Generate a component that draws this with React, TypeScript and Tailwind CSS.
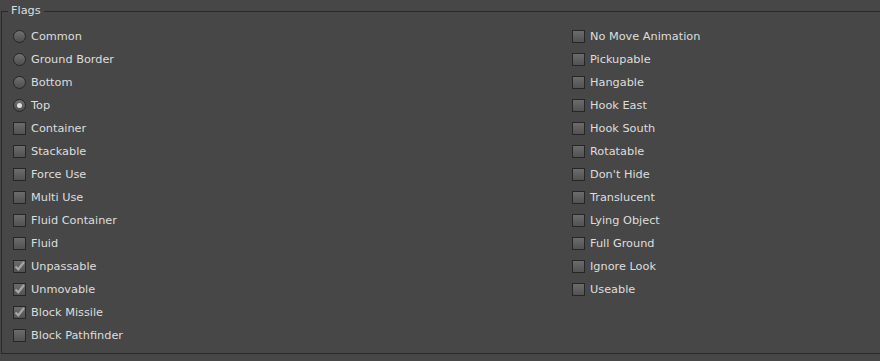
import React from 'react'

type Flag = { label: string; kind: 'radio' | 'check'; on?: boolean }

const left: Flag[] = [
  { label: 'Common', kind: 'radio' },
  { label: 'Ground Border', kind: 'radio' },
  { label: 'Bottom', kind: 'radio' },
  { label: 'Top', kind: 'radio', on: true },
  { label: 'Container', kind: 'check' },
  { label: 'Stackable', kind: 'check' },
  { label: 'Force Use', kind: 'check' },
  { label: 'Multi Use', kind: 'check' },
  { label: 'Fluid Container', kind: 'check' },
  { label: 'Fluid', kind: 'check' },
  { label: 'Unpassable', kind: 'check', on: true },
  { label: 'Unmovable', kind: 'check', on: true },
  { label: 'Block Missile', kind: 'check', on: true },
  { label: 'Block Pathfinder', kind: 'check' },
]

const right: Flag[] = [
  'No Move Animation',
  'Pickupable',
  'Hangable',
  'Hook East',
  'Hook South',
  'Rotatable',
  "Don't Hide",
  'Translucent',
  'Lying Object',
  'Full Ground',
  'Ignore Look',
  'Useable',
].map((label) => ({ label, kind: 'check' as const }))

function Radio({ on }: { on?: boolean }) {
  return (
    <span className="w-[13px] h-[13px] rounded-full border border-[#262626] bg-gradient-to-b from-[#717171] to-[#4e4e4e] flex items-center justify-center shrink-0">
      {on && <span className="w-[5px] h-[5px] rounded-full bg-[#e0e0e0]" />}
    </span>
  )
}

function Check({ on }: { on?: boolean }) {
  return (
    <span className="w-[13px] h-[13px] border border-[#262626] bg-gradient-to-b from-[#6c6c6c] to-[#525252] flex items-center justify-center shrink-0">
      {on && (
        <svg width="11" height="11" viewBox="0 0 11 11">
          <path d="M1.5 5.5 L4.3 8.3 L10 1" fill="none" stroke="#a6a6a6" strokeWidth="2.2" />
        </svg>
      )}
    </span>
  )
}

function Row({ flag }: { flag: Flag }) {
  return (
    <div className="h-[23px] flex items-center gap-[5px]">
      {flag.kind === 'radio' ? <Radio on={flag.on} /> : <Check on={flag.on} />}
      <span className="text-[11.3px] leading-[13px] text-[#dedede]">{flag.label}</span>
    </div>
  )
}

export default function App() {
  return (
    <div className="w-[880px] h-[361px] bg-[#474747] overflow-hidden font-['DejaVu_Sans',sans-serif] pt-[4px]">
      <fieldset className="ml-[1px] w-[900px] h-[350px] border border-[#2a2a2a] pl-[11px] pt-[7px]">
        <legend className="-ml-[5px] px-[3px] text-[11.3px] leading-[14px] text-[#dedede]">Flags</legend>
        <div className="flex">
          <div className="w-[559px] flex flex-col">
            {left.map((f) => (
              <Row key={f.label} flag={f} />
            ))}
          </div>
          <div className="flex flex-col">
            {right.map((f) => (
              <Row key={f.label} flag={f} />
            ))}
          </div>
        </div>
      </fieldset>
    </div>
  )
}
